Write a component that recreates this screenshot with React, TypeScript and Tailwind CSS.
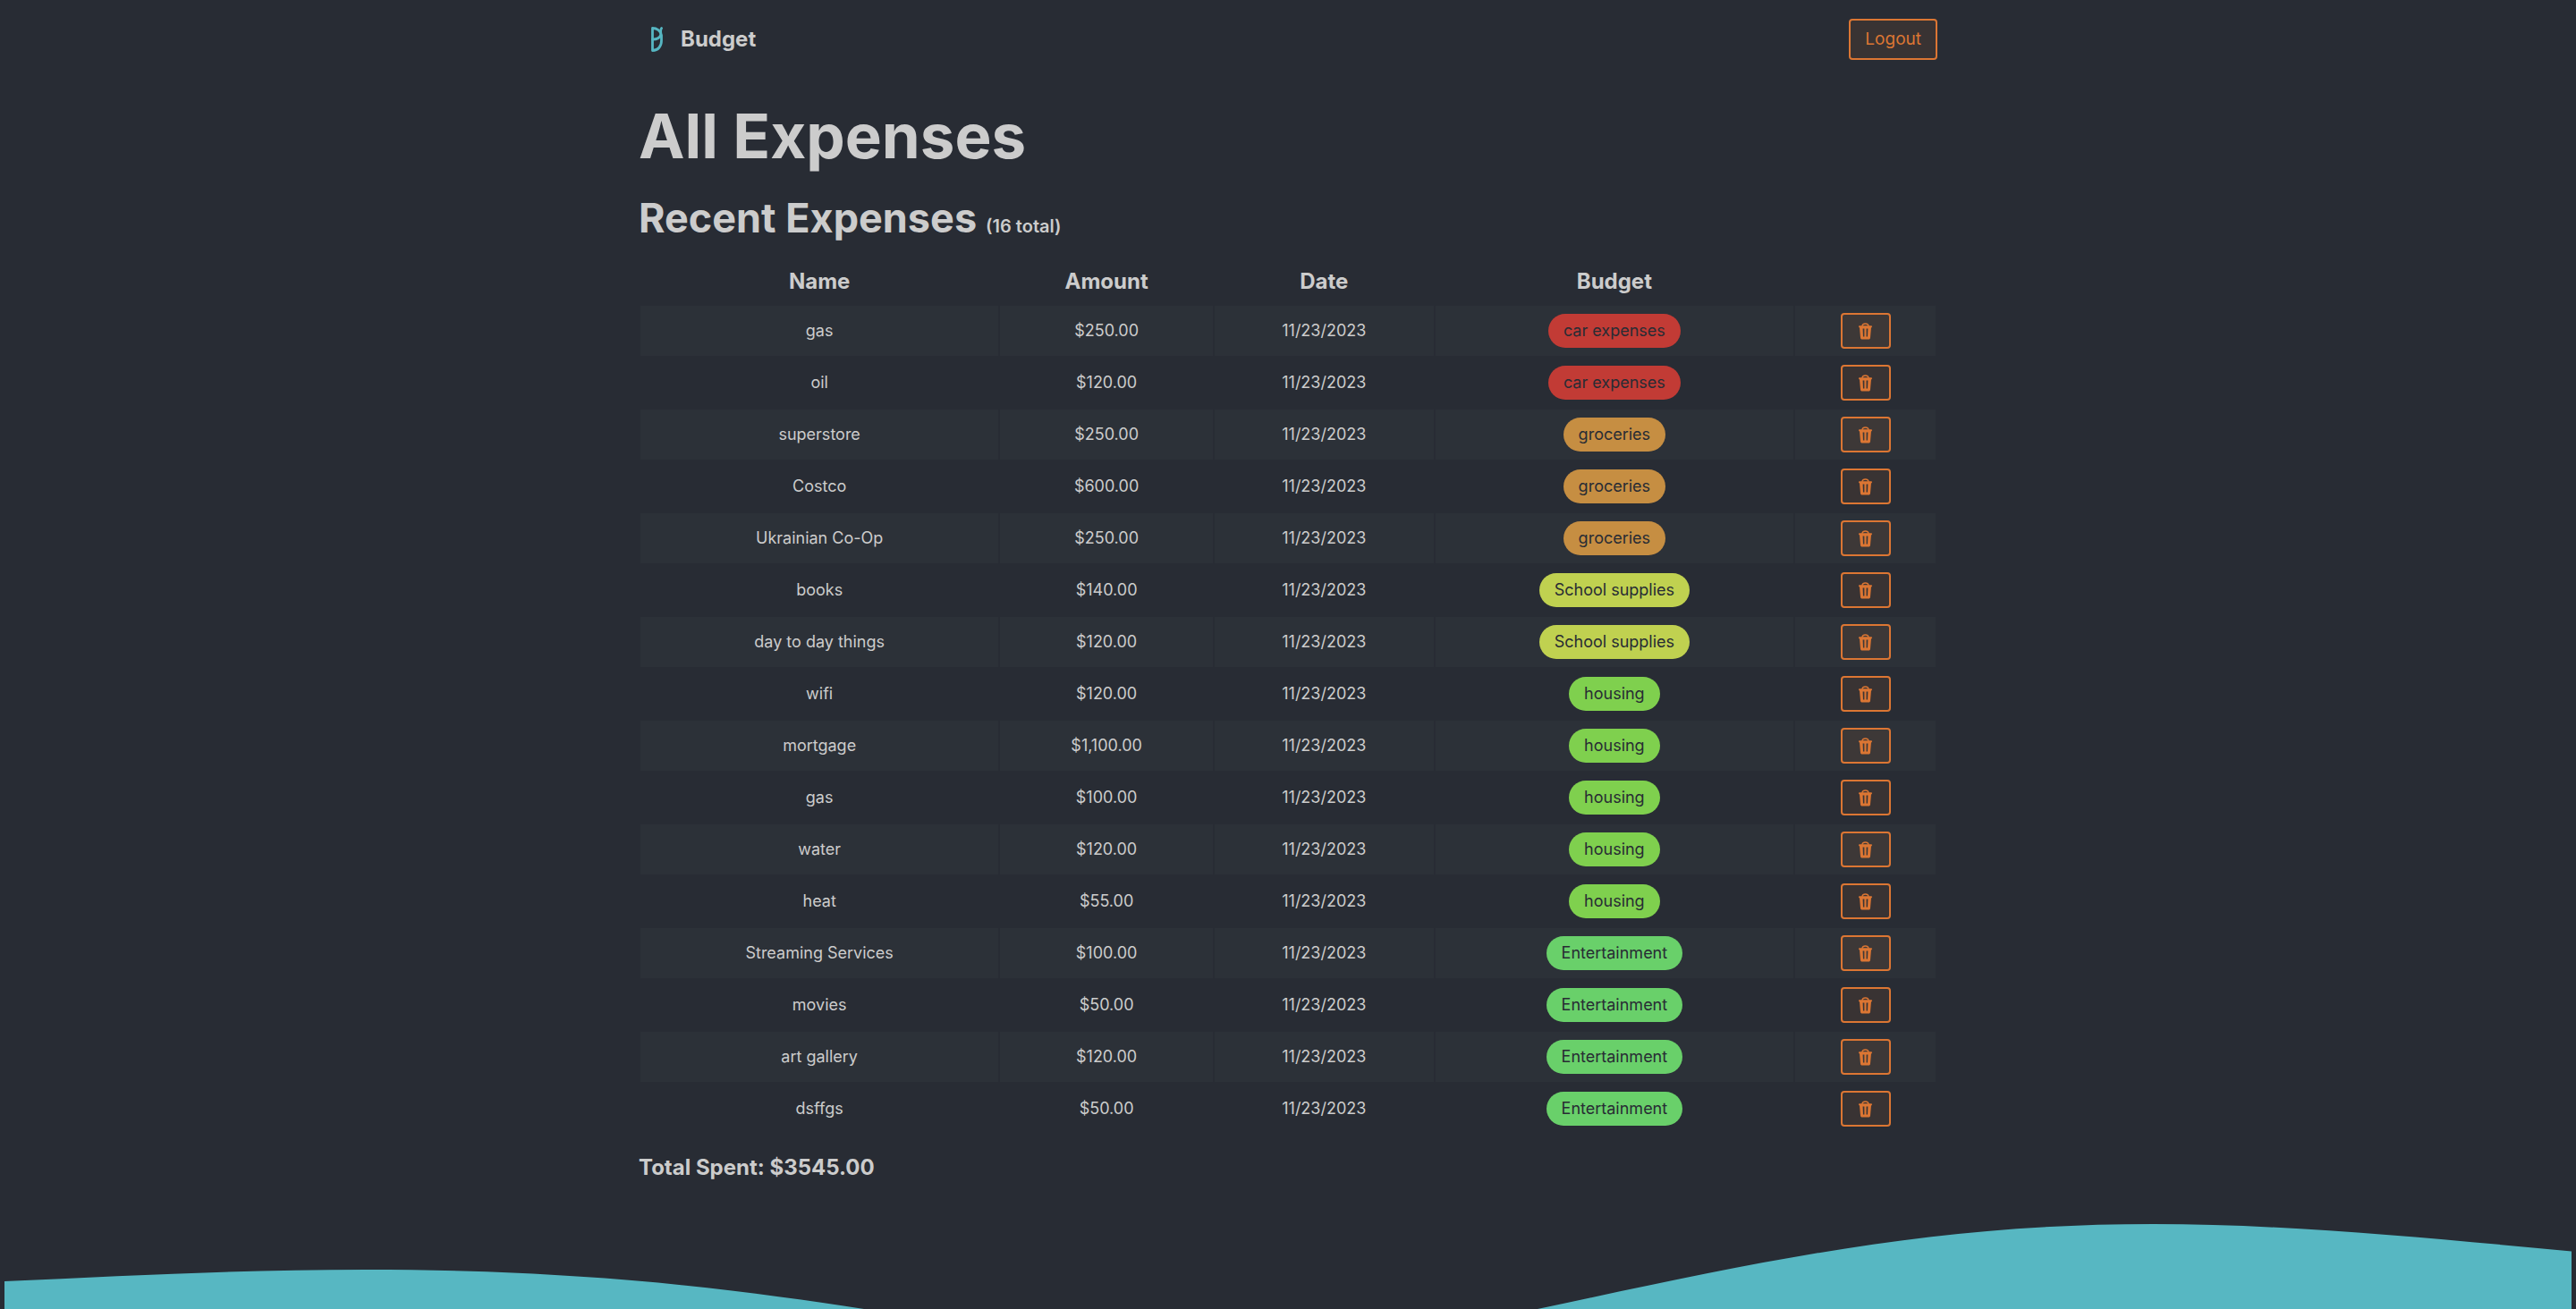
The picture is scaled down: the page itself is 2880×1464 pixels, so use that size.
import React from "react";

type Category = "car expenses" | "groceries" | "School supplies" | "housing" | "Entertainment";

const categoryColor: Record<Category, string> = {
  "car expenses": "bg-[#c23b35]",
  groceries: "bg-[#c68e42]",
  "School supplies": "bg-[#c0d150]",
  housing: "bg-[#7fd04e]",
  Entertainment: "bg-[#69d06a]",
};

const expenses: { name: string; amount: string; budget: Category }[] = [
  { name: "gas", amount: "$250.00", budget: "car expenses" },
  { name: "oil", amount: "$120.00", budget: "car expenses" },
  { name: "superstore", amount: "$250.00", budget: "groceries" },
  { name: "Costco", amount: "$600.00", budget: "groceries" },
  { name: "Ukrainian Co-Op", amount: "$250.00", budget: "groceries" },
  { name: "books", amount: "$140.00", budget: "School supplies" },
  { name: "day to day things", amount: "$120.00", budget: "School supplies" },
  { name: "wifi", amount: "$120.00", budget: "housing" },
  { name: "mortgage", amount: "$1,100.00", budget: "housing" },
  { name: "gas", amount: "$100.00", budget: "housing" },
  { name: "water", amount: "$120.00", budget: "housing" },
  { name: "heat", amount: "$55.00", budget: "housing" },
  { name: "Streaming Services", amount: "$100.00", budget: "Entertainment" },
  { name: "movies", amount: "$50.00", budget: "Entertainment" },
  { name: "art gallery", amount: "$120.00", budget: "Entertainment" },
  { name: "dsffgs", amount: "$50.00", budget: "Entertainment" },
];

function Logo() {
  return (
    <svg viewBox="0 0 13 28" className="h-7 w-[13px]" fill="none" stroke="#56b6c2" strokeWidth="2.8" strokeLinecap="round" strokeLinejoin="round" aria-hidden="true">
      <path d="M1.5 1.5V26.5C8 26.5 11.5 21.5 11.5 15.5V9.5C10.5 4.5 6.5 1.5 1.5 1.5Z" />
      <path d="M11.6 1.5C9.6 4.2 11.2 6.5 10.8 9C9.8 12.2 6 14 1.5 14.2" />
    </svg>
  );
}

function TrashIcon() {
  return (
    <svg viewBox="0 0 15 19" className="h-[19px] w-[15px]" aria-hidden="true">
      <path d="M3.8 3.8C4.3 1.7 5.6 1 7.5 1s3.2.7 3.7 2.8" fill="none" stroke="currentColor" strokeWidth="1.3" />
      <path
        fill="currentColor"
        fillRule="evenodd"
        d="M.7 3.2h13.6c.4 0 .6.3.6.7v.8c0 .4-.2.6-.6.6h-.3l-1 11.400c-.1 1.200-.8 1.800-1.900 1.800H3.900c-1.100 0-1.800-.6-1.900-1.800L1 5.300H.7c-.4 0-.6-.2-.6-.6v-.8c0-.4.2-.7.6-.7ZM4.600 6.600l.4 9h1.400v-9ZM8.600 6.600v9H10l.4-9Z"
      />
    </svg>
  );
}

export default function App() {
  return (
    <div className="flex min-h-screen flex-col overflow-hidden bg-[#282c34] font-['Inter',sans-serif] text-lg text-[#cccccc]">
      <div className="mx-auto w-full max-w-[1452px]">
        <nav className="flex h-[88px] items-center justify-between">
          <a href="#" className="flex items-center gap-5 pl-[14px] text-2xl font-bold">
            <Logo />
            <span>Budget</span>
          </a>
          <button type="button" className="h-[46px] rounded border-2 border-[#dc7633] bg-[#dc7633]/10 px-4 text-[19px] text-[#dc7633]">
            Logout
          </button>
        </nav>

        <main>
          <h1 className="mt-7 text-[69px] leading-[72px] font-bold">All Expenses</h1>
          <h2 className="mt-8 flex items-baseline gap-2.5 text-[45px] leading-[48px] font-bold">
            Recent Expenses <small className="text-xl leading-6 font-semibold">(16 total)</small>
          </h2>

          <table className="mt-5 w-full table-fixed border-separate border-spacing-[2px] text-center">
            <colgroup>
              <col className="w-[27.8%]" />
              <col className="w-[16.5%]" />
              <col className="w-[17%]" />
              <col className="w-[27.8%]" />
              <col />
            </colgroup>
            <thead>
              <tr className="h-[50px] text-2xl">
                <th scope="col">Name</th>
                <th scope="col">Amount</th>
                <th scope="col">Date</th>
                <th scope="col">Budget</th>
                <th scope="col" aria-label="Actions" />
              </tr>
            </thead>
            <tbody>
              {expenses.map((e, i) => (
                <tr key={i} className="h-14 [&:nth-child(odd)>td]:bg-[#2c3138]">
                  <td>{e.name}</td>
                  <td>{e.amount}</td>
                  <td>11/23/2023</td>
                  <td>
                    <div className="flex justify-center">
                      <a href="#" className={`flex h-[38px] items-center rounded-full px-[17px] text-[#282c34] ${categoryColor[e.budget]}`}>
                        {e.budget}
                      </a>
                    </div>
                  </td>
                  <td>
                    <div className="flex justify-center">
                      <button type="button" aria-label={`Delete ${e.name}`} className="flex h-10 w-14 items-center justify-center rounded border-2 border-[#dc7633] bg-[#dc7633]/10 text-[#dc7633]">
                        <TrashIcon />
                      </button>
                    </div>
                  </td>
                </tr>
              ))}
            </tbody>
          </table>

          <p className="mt-5 text-2xl font-bold">Total Spent: $3545.00</p>
        </main>
      </div>

      <footer className="mt-auto px-[5px]">
        <svg viewBox="0 0 2870 95" className="block w-full" aria-hidden="true">
          <path
            fill="#57b7c2"
            d="M0 64C135 58 265 51 403 51C655 51 825 74 961 95H1714C1955 44 2145 0 2402 0C2555 0 2715 16 2870 30.500V95H0Z"
          />
        </svg>
      </footer>
    </div>
  );
}
